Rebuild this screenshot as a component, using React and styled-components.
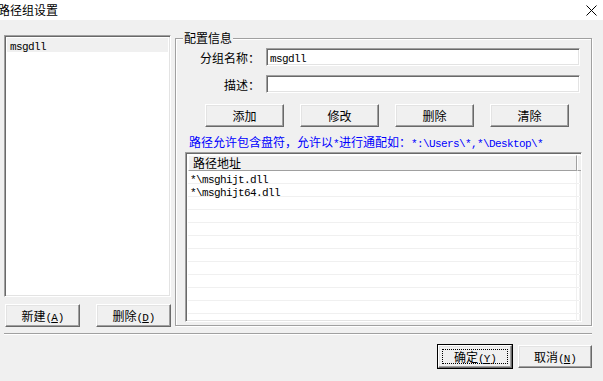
import React from "react";
import styled, { createGlobalStyle, css } from "styled-components";

const GlobalStyle = createGlobalStyle`
  html, body {
    margin: 0;
    padding: 0;
    background: #f0f0f0;
  }
  * {
    box-sizing: border-box;
  }
`;

const ui = `"Noto Sans CJK SC", "Noto Sans", sans-serif`;

const Window = styled.div`
  width: 603px;
  height: 381px;
  overflow: hidden;
  background: #f0f0f0;
  font-family: ${ui};
  font-size: 12px;
  color: #000;
`;

const TitleBar = styled.div`
  height: 20px;
  background: #fff;
  display: flex;
  align-items: center;
  justify-content: space-between;
  padding-right: 6px;
`;

const Title = styled.span`
  margin-left: -2px;
  font-size: 12px;
  line-height: 14px;
`;

const Body = styled.div`
  padding: 15px 11px 0 4px;
`;

const Main = styled.div`
  display: flex;
  align-items: flex-start;
  gap: 4px;
`;

const LeftCol = styled.div`
  width: 167px;
  display: flex;
  flex-direction: column;
`;

const sunken = css`
  background: #fff;
  border: 1px solid;
  border-color: #a0a0a0 #fff #fff #a0a0a0;
  box-shadow: inset 1px 1px 0 #696969, inset -1px -1px 0 #e3e3e3;
`;

const ListBox = styled.div`
  ${sunken};
  height: 262px;
  padding: 2px;
`;

const ListItem = styled.div`
  height: 14px;
  line-height: 14px;
  padding-left: 3px;
  background: ${(p) => (p.$selected ? "#f0f0f0" : "transparent")};
`;

const Mono = styled.span`
  font-family: "Liberation Mono", "DejaVu Sans Mono", monospace;
  font-size: 11px;
  letter-spacing: -0.6px;
`;

const ButtonRow = styled.div`
  display: flex;
  gap: 16px;
  margin-top: 7px;
  padding-left: 1px;
`;

const Button = styled.button`
  position: relative;
  width: ${(p) => p.$w || 79}px;
  height: 23px;
  padding: 0;
  background: #f0f0f0;
  font-family: ${ui};
  font-size: 12px;
  color: #000;
  border: 1px solid;
  border-color: #fff #696969 #696969 #fff;
  box-shadow: inset -1px -1px 0 #a0a0a0, inset 1px 1px 0 #e3e3e3;
  ${(p) =>
    p.$default &&
    css`
      outline: 1px solid #000;
      outline-offset: 0;
      &::after {
        content: "";
        position: absolute;
        inset: 3px;
        border: 1px dotted #000;
      }
    `}
`;

const GroupBox = styled.div`
  position: relative;
  width: 417px;
  height: 288px;
  margin-top: 3px;
  border: 1px solid #a0a0a0;
  box-shadow: inset 1px 1px 0 #fff, 1px 1px 0 #fff;
  padding-top: 9px;
`;

const Legend = styled.span`
  position: absolute;
  top: -8px;
  left: 7px;
  padding: 0 1px;
  background: #f0f0f0;
  line-height: 14px;
`;

const FieldRow = styled.div`
  display: flex;
  align-items: center;
  gap: 6px;
  margin-top: ${(p) => p.$mt || 0}px;
`;

const FieldLabel = styled.span`
  width: 84px;
  text-align: right;
`;

const TextInput = styled.div`
  ${sunken};
  width: 314px;
  height: 18px;
  line-height: 15px;
  padding-left: 3px;
`;

const ActionRow = styled.div`
  display: flex;
  gap: 16px;
  margin-top: 11px;
  padding-left: 29px;
`;

const Hint = styled.div`
  margin-top: 7px;
  padding-left: 13px;
  color: #0000ff;
  height: 15px;
  line-height: 15px;
  white-space: nowrap;
`;

const ListView = styled.div`
  ${sunken};
  margin: 3px 0 0 9px;
  width: 397px;
  height: 170px;
  padding: 2px;
  overflow: hidden;
`;

const HeaderRow = styled.div`
  display: flex;
  height: 16px;
`;

const HeaderCell = styled.div`
  width: ${(p) => p.$w}px;
  flex: ${(p) => (p.$w ? "none" : 1)};
  line-height: 14px;
  padding-left: 4px;
  background: #f0f0f0;
  border: 1px solid;
  border-color: #fff #a0a0a0 #a0a0a0 #fff;
`;

const GridRow = styled.div`
  display: flex;
  height: 13px;
  border-bottom: 1px solid #f0f0f0;
`;

const GridCell = styled.div`
  width: ${(p) => p.$w}px;
  flex: ${(p) => (p.$w ? "none" : 1)};
  border-right: 1px solid #f0f0f0;
  line-height: 13px;
  padding-left: 2px;
  white-space: nowrap;
`;

const Separator = styled.div`
  margin-top: 6px;
  height: 2px;
  border-top: 1px solid #a0a0a0;
  border-bottom: 1px solid #fff;
`;

const Footer = styled.div`
  display: flex;
  justify-content: flex-end;
  gap: 6px;
  margin-top: 10px;
`;

const Key = styled.u`
  font-family: "Liberation Mono", monospace;
  font-size: 11px;
`;

const Paren = styled.span`
  font-family: "Liberation Mono", monospace;
  font-size: 11px;
  letter-spacing: -1px;
`;

function Mnemonic({ label, k }) {
  return (
    <>
      {label}
      <Paren>(</Paren>
      <Key>{k}</Key>
      <Paren>)</Paren>
    </>
  );
}

const CloseIcon = () => (
  <svg width="11" height="11" viewBox="0 0 11 11">
    <path d="M0.5 0.5 L10.5 10.5 M10.5 0.5 L0.5 10.5" stroke="#000" strokeWidth="1" />
  </svg>
);

const paths = ["*\\msghijt.dll", "*\\msghijt64.dll"];
const rows = Array.from({ length: 12 }, (_, i) => paths[i] || "");

export default function App() {
  return (
    <Window>
      <GlobalStyle />
      <TitleBar>
        <Title>路径组设置</Title>
        <CloseIcon />
      </TitleBar>
      <Body>
        <Main>
          <LeftCol>
            <ListBox>
              <ListItem $selected>
                <Mono>msgdll</Mono>
              </ListItem>
            </ListBox>
            <ButtonRow>
              <Button $w={75}>
                <Mnemonic label="新建" k="A" />
              </Button>
              <Button $w={75}>
                <Mnemonic label="删除" k="D" />
              </Button>
            </ButtonRow>
          </LeftCol>
          <GroupBox>
            <Legend>配置信息</Legend>
            <FieldRow>
              <FieldLabel>分组名称：</FieldLabel>
              <TextInput>
                <Mono>msgdll</Mono>
              </TextInput>
            </FieldRow>
            <FieldRow $mt={9}>
              <FieldLabel>描述：</FieldLabel>
              <TextInput />
            </FieldRow>
            <ActionRow>
              <Button>添加</Button>
              <Button>修改</Button>
              <Button>删除</Button>
              <Button>清除</Button>
            </ActionRow>
            <Hint>
              路径允许包含盘符，允许以<Mono>*</Mono>进行通配如：
              <Mono>*:\Users\*,*\Desktop\*</Mono>
            </Hint>
            <ListView>
              <HeaderRow>
                <HeaderCell $w={389}>路径地址</HeaderCell>
                <HeaderCell />
              </HeaderRow>
              {rows.map((r, i) => (
                <GridRow key={i}>
                  <GridCell $w={389}>
                    <Mono>{r}</Mono>
                  </GridCell>
                  <GridCell />
                </GridRow>
              ))}
            </ListView>
          </GroupBox>
        </Main>
        <Separator />
        <Footer>
          <Button $w={74} $default>
            <Mnemonic label="确定" k="Y" />
          </Button>
          <Button $w={74}>
            <Mnemonic label="取消" k="N" />
          </Button>
        </Footer>
      </Body>
    </Window>
  );
}
